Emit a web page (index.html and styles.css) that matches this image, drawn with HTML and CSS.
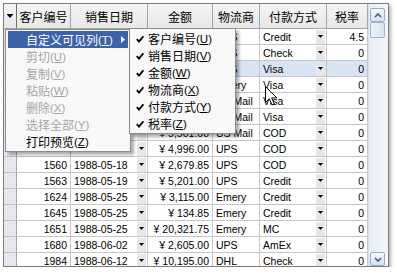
FILE: index.html
```html
<!DOCTYPE html>
<html>
<head>
<meta charset="utf-8">
<link rel="stylesheet" href="styles.css">
</head>
<body>
<div class="window">
  <div class="grid">
    <div class="row head">
      <div class="h s"><span class="tri"></span></div>
      <div class="h">客户编号</div>
      <div class="h">销售日期</div>
      <div class="h">金额</div>
      <div class="h">物流商</div>
      <div class="h">付款方式</div>
      <div class="h">税率</div>
    </div>
    <div class="row"><div class="c s"></div><div class="c r"></div><div class="c dd"><span></span><span class="btn"></span></div><div class="c r"></div><div class="c">UPS</div><div class="c dd"><span>Credit</span><span class="btn"></span></div><div class="c r">4.5</div></div>
    <div class="row"><div class="c s"></div><div class="c r"></div><div class="c dd"><span></span><span class="btn"></span></div><div class="c r"></div><div class="c">UPS</div><div class="c dd"><span>Check</span><span class="btn"></span></div><div class="c r">0</div></div>
    <div class="row selrow"><div class="c s"></div><div class="c r"></div><div class="c dd"><span></span><span class="btn"></span></div><div class="c r"></div><div class="c">UPS</div><div class="c dd"><span>Visa</span><span class="btn"></span></div><div class="c r">0</div></div>
    <div class="row"><div class="c s"></div><div class="c r"></div><div class="c dd"><span></span><span class="btn"></span></div><div class="c r"></div><div class="c">Emery</div><div class="c dd"><span>Visa</span><span class="btn"></span></div><div class="c r">0</div></div>
    <div class="row"><div class="c s"></div><div class="c r"></div><div class="c dd"><span></span><span class="btn"></span></div><div class="c r"></div><div class="c">US Mail</div><div class="c dd"><span>Visa</span><span class="btn"></span></div><div class="c r">0</div></div>
    <div class="row"><div class="c s"></div><div class="c r"></div><div class="c dd"><span></span><span class="btn"></span></div><div class="c r"></div><div class="c">US Mail</div><div class="c dd"><span>Visa</span><span class="btn"></span></div><div class="c r">0</div></div>
    <div class="row"><div class="c s"></div><div class="c r"></div><div class="c dd"><span></span><span class="btn"></span></div><div class="c r">¥ 5,501.00</div><div class="c">US Mail</div><div class="c dd"><span>COD</span><span class="btn"></span></div><div class="c r">0</div></div>
    <div class="row"><div class="c s"></div><div class="c r"></div><div class="c dd"><span></span><span class="btn"></span></div><div class="c r">¥ 4,996.00</div><div class="c">UPS</div><div class="c dd"><span>COD</span><span class="btn"></span></div><div class="c r">0</div></div>
    <div class="row"><div class="c s"></div><div class="c r">1560</div><div class="c dd"><span>1988-05-18</span><span class="btn"></span></div><div class="c r">¥ 2,679.85</div><div class="c">UPS</div><div class="c dd"><span>COD</span><span class="btn"></span></div><div class="c r">0</div></div>
    <div class="row"><div class="c s"></div><div class="c r">1563</div><div class="c dd"><span>1988-05-19</span><span class="btn"></span></div><div class="c r">¥ 5,201.00</div><div class="c">UPS</div><div class="c dd"><span>Credit</span><span class="btn"></span></div><div class="c r">0</div></div>
    <div class="row"><div class="c s"></div><div class="c r">1624</div><div class="c dd"><span>1988-05-25</span><span class="btn"></span></div><div class="c r">¥ 3,115.00</div><div class="c">Emery</div><div class="c dd"><span>Credit</span><span class="btn"></span></div><div class="c r">0</div></div>
    <div class="row"><div class="c s"></div><div class="c r">1645</div><div class="c dd"><span>1988-05-25</span><span class="btn"></span></div><div class="c r">¥ 134.85</div><div class="c">Emery</div><div class="c dd"><span>Credit</span><span class="btn"></span></div><div class="c r">0</div></div>
    <div class="row"><div class="c s"></div><div class="c r">1651</div><div class="c dd"><span>1988-05-25</span><span class="btn"></span></div><div class="c r">¥ 20,321.75</div><div class="c">Emery</div><div class="c dd"><span>MC</span><span class="btn"></span></div><div class="c r">0</div></div>
    <div class="row"><div class="c s"></div><div class="c r">1680</div><div class="c dd"><span>1988-06-02</span><span class="btn"></span></div><div class="c r">¥ 2,605.00</div><div class="c">UPS</div><div class="c dd"><span>AmEx</span><span class="btn"></span></div><div class="c r">0</div></div>
    <div class="row"><div class="c s"></div><div class="c r">1984</div><div class="c dd"><span>1988-06-12</span><span class="btn"></span></div><div class="c r">¥ 10,195.00</div><div class="c">DHL</div><div class="c dd"><span>Check</span><span class="btn"></span></div><div class="c r">0</div></div>
  </div>
  <div class="vsb">
    <div class="sbtn"><svg width="8" height="5" viewBox="0 0 8 5"><polyline points="1,4 4,1 7,4" fill="none" stroke="#46597c" stroke-width="1.6"/></svg></div>
    <div class="thumb"></div>
    <div class="track"></div>
    <div class="sbtn"><svg width="8" height="5" viewBox="0 0 8 5"><polyline points="1,1 4,4 7,1" fill="none" stroke="#46597c" stroke-width="1.6"/></svg></div>
  </div>
</div>

<div class="menu main">
  <div class="mi hl">自定义可见列<span class="mn">(<u>T</u>)</span><span class="arr"></span></div>
  <div class="mi dis">剪切<span class="mn">(<u>U</u>)</span></div>
  <div class="mi dis">复制<span class="mn">(<u>V</u>)</span></div>
  <div class="mi dis">粘贴<span class="mn">(<u>W</u>)</span></div>
  <div class="mi dis">删除<span class="mn">(<u>X</u>)</span></div>
  <div class="mi dis">选择全部<span class="mn">(<u>Y</u>)</span></div>
  <div class="mi">打印预览<span class="mn">(<u>Z</u>)</span></div>
</div>

<div class="menu sub">
  <div class="mi"><span class="chk"><svg width="8" height="8" viewBox="0 0 8 8"><path d="M0.8 4.2 L3 6.6 L7.4 1.2" fill="none" stroke="#000" stroke-width="1.8"/></svg></span>客户编号<span class="mn">(<u>U</u>)</span></div>
  <div class="mi"><span class="chk"><svg width="8" height="8" viewBox="0 0 8 8"><path d="M0.8 4.2 L3 6.6 L7.4 1.2" fill="none" stroke="#000" stroke-width="1.8"/></svg></span>销售日期<span class="mn">(<u>V</u>)</span></div>
  <div class="mi"><span class="chk"><svg width="8" height="8" viewBox="0 0 8 8"><path d="M0.8 4.2 L3 6.6 L7.4 1.2" fill="none" stroke="#000" stroke-width="1.8"/></svg></span>金额<span class="mn">(<u>W</u>)</span></div>
  <div class="mi"><span class="chk"><svg width="8" height="8" viewBox="0 0 8 8"><path d="M0.8 4.2 L3 6.6 L7.4 1.2" fill="none" stroke="#000" stroke-width="1.8"/></svg></span>物流商<span class="mn">(<u>X</u>)</span></div>
  <div class="mi"><span class="chk"><svg width="8" height="8" viewBox="0 0 8 8"><path d="M0.8 4.2 L3 6.6 L7.4 1.2" fill="none" stroke="#000" stroke-width="1.8"/></svg></span>付款方式<span class="mn">(<u>Y</u>)</span></div>
  <div class="mi"><span class="chk"><svg width="8" height="8" viewBox="0 0 8 8"><path d="M0.8 4.2 L3 6.6 L7.4 1.2" fill="none" stroke="#000" stroke-width="1.8"/></svg></span>税率<span class="mn">(<u>Z</u>)</span></div>
</div>

<svg class="cursor" width="13" height="20" viewBox="0 0 13 20"><path d="M0.5 0.5 L0.5 16.5 L4.3 12.8 L7 18.8 L9.3 17.8 L6.7 11.9 L11.8 11.9 Z" fill="#fff" stroke="#000" stroke-width="1"/></svg>
</body>
</html>
```

FILE: styles.css
```css
* { box-sizing: border-box; }
body {
  margin: 0;
  background: #ffffff;
  font-family: "Liberation Sans", Arial, sans-serif;
  color: #000;
}
.window {
  margin: 3px 0 0 3px;
  width: 386px;
  height: 264px;
  border: 1px solid #7c7c7c;
  box-shadow: 2px 2px 3px rgba(0,0,0,0.3);
  background: #fff;
  display: flex;
}
.grid {
  width: 364px;
  height: 262px;
  overflow: hidden;
  display: flex;
  flex-direction: column;
}
.row {
  display: grid;
  grid-template-columns: 13px 54px 77px 65px 47px 67px 41px;
  height: 16px;
  flex: none;
}
.row.head { height: 25px; }
.h {
  background: linear-gradient(#f4f4f4, #e8e8e8);
  border-right: 1px solid #a4a4a4;
  border-bottom: 1px solid #a4a4a4;
  display: flex;
  align-items: center;
  justify-content: center;
  font-family: "Noto Sans CJK SC", sans-serif;
  font-size: 12px;
  white-space: nowrap;
}
.h.s { border-right-color: #6e6e6e; }
.tri {
  width: 7px;
  height: 4px;
  background: #000;
  clip-path: polygon(0 0, 100% 0, 50% 100%);
}
.c {
  border-right: 1px solid #c6c6c6;
  border-bottom: 1px solid #c6c6c6;
  display: flex;
  align-items: center;
  padding: 0 3px;
  font-size: 10.5px;
  white-space: nowrap;
  overflow: hidden;
}
.c.s {
  background: #e6e6ee;
  border-right-color: #a4a4a4;
}
.c.r { justify-content: flex-end; }
.c.dd {
  justify-content: space-between;
  padding-right: 1px;
  padding-left: 3px;
}
.btn {
  width: 9px;
  height: 14px;
  background: #e5e5ea;
  display: flex;
  align-items: center;
  justify-content: center;
  flex: none;
}
.btn::after {
  content: "";
  width: 5px;
  height: 3px;
  background: #000;
  clip-path: polygon(0 0, 100% 0, 50% 100%);
}
.row.selrow .c:not(.s) { background: #d9e4f3; }
.vsb {
  width: 20px;
  height: 262px;
  border-left: 1px solid #d8dfe9;
  background: linear-gradient(to right, #e7edf6, #f4f7fb);
  padding: 4px 3px 0 1px;
  display: flex;
  flex-direction: column;
}
.sbtn {
  height: 14px;
  border: 1px solid #98adc8;
  border-radius: 2px;
  background: linear-gradient(#f5f8fd, #d6e2f1);
  display: flex;
  align-items: center;
  justify-content: center;
  flex: none;
}
.thumb {
  height: 16px;
  border: 1px solid #a0b4ce;
  border-radius: 2px;
  background: linear-gradient(to right, #eef3fa, #d5e1f0);
  flex: none;
}
.track { flex: 1; }
.menu {
  position: absolute;
  background: #f8f8f8;
  border: 1px solid #8c8c8c;
  box-shadow: 3px 3px 3px rgba(0,0,0,0.32);
  padding: 1px 0;
  font-family: "Noto Sans CJK SC", sans-serif;
  font-size: 12px;
}
.main { left: 5px; top: 29px; width: 126px; }
.sub { left: 129px; top: 28px; width: 107px; }
.mi {
  position: relative;
  height: 17px;
  margin: 0 2px;
  padding-left: 18px;
  display: flex;
  align-items: center;
  white-space: nowrap;
  color: #000;
}
.mi.dis { color: #a5a5a5; }
.mi.hl { background: #3c62aa; color: #fff; }
.mn {
  font-family: "Liberation Sans", Arial, sans-serif;
  font-size: 11.5px;
}
.arr {
  position: absolute;
  right: 3px;
  top: 5px;
  width: 4px;
  height: 7px;
  background: #fff;
  clip-path: polygon(0 0, 100% 50%, 0 100%);
}
.sub .mi { margin: 0; padding-left: 6px; }
.chk {
  width: 12px;
  display: flex;
  align-items: center;
  flex: none;
}
.cursor {
  position: absolute;
  left: 265px;
  top: 86px;
}
```
